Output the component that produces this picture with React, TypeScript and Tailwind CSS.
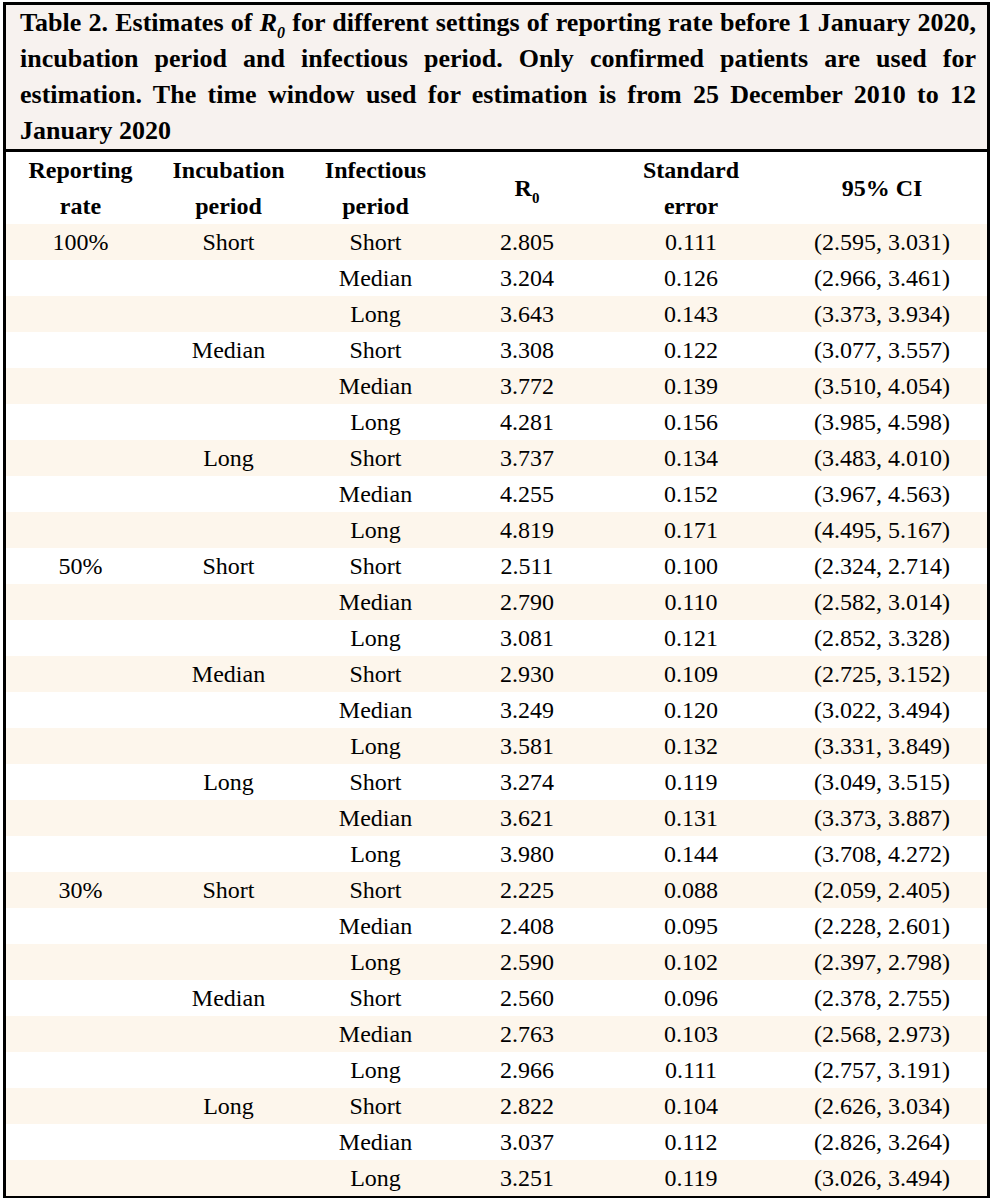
import React from "react";

type Row = { rate?: string; inc?: string; inf: string; r0: string; se: string; ci: string };

const rows: Row[] = [
  { rate: "100%", inc: "Short", inf: "Short", r0: "2.805", se: "0.111", ci: "(2.595, 3.031)" },
  { inf: "Median", r0: "3.204", se: "0.126", ci: "(2.966, 3.461)" },
  { inf: "Long", r0: "3.643", se: "0.143", ci: "(3.373, 3.934)" },
  { inc: "Median", inf: "Short", r0: "3.308", se: "0.122", ci: "(3.077, 3.557)" },
  { inf: "Median", r0: "3.772", se: "0.139", ci: "(3.510, 4.054)" },
  { inf: "Long", r0: "4.281", se: "0.156", ci: "(3.985, 4.598)" },
  { inc: "Long", inf: "Short", r0: "3.737", se: "0.134", ci: "(3.483, 4.010)" },
  { inf: "Median", r0: "4.255", se: "0.152", ci: "(3.967, 4.563)" },
  { inf: "Long", r0: "4.819", se: "0.171", ci: "(4.495, 5.167)" },
  { rate: "50%", inc: "Short", inf: "Short", r0: "2.511", se: "0.100", ci: "(2.324, 2.714)" },
  { inf: "Median", r0: "2.790", se: "0.110", ci: "(2.582, 3.014)" },
  { inf: "Long", r0: "3.081", se: "0.121", ci: "(2.852, 3.328)" },
  { inc: "Median", inf: "Short", r0: "2.930", se: "0.109", ci: "(2.725, 3.152)" },
  { inf: "Median", r0: "3.249", se: "0.120", ci: "(3.022, 3.494)" },
  { inf: "Long", r0: "3.581", se: "0.132", ci: "(3.331, 3.849)" },
  { inc: "Long", inf: "Short", r0: "3.274", se: "0.119", ci: "(3.049, 3.515)" },
  { inf: "Median", r0: "3.621", se: "0.131", ci: "(3.373, 3.887)" },
  { inf: "Long", r0: "3.980", se: "0.144", ci: "(3.708, 4.272)" },
  { rate: "30%", inc: "Short", inf: "Short", r0: "2.225", se: "0.088", ci: "(2.059, 2.405)" },
  { inf: "Median", r0: "2.408", se: "0.095", ci: "(2.228, 2.601)" },
  { inf: "Long", r0: "2.590", se: "0.102", ci: "(2.397, 2.798)" },
  { inc: "Median", inf: "Short", r0: "2.560", se: "0.096", ci: "(2.378, 2.755)" },
  { inf: "Median", r0: "2.763", se: "0.103", ci: "(2.568, 2.973)" },
  { inf: "Long", r0: "2.966", se: "0.111", ci: "(2.757, 3.191)" },
  { inc: "Long", inf: "Short", r0: "2.822", se: "0.104", ci: "(2.626, 3.034)" },
  { inf: "Median", r0: "3.037", se: "0.112", ci: "(2.826, 3.264)" },
  { inf: "Long", r0: "3.251", se: "0.119", ci: "(3.026, 3.494)" },
];

const App = () => {
  return (
    <div className="bg-white w-[992px] h-[1198px] pt-[2px] pl-[3px] font-['Liberation_Serif','Times_New_Roman',serif] text-black">
      <div className="w-[987px] border-[3px] border-black">
        {/* Caption */}
        <div className="bg-[#f7f2ef] pl-[14px] pr-[11px] text-[26px] leading-[36px] font-bold text-justify border-b-[3px] border-black">
          Table 2. Estimates of{" "}
          <i>
            R<sub className="text-[16px] leading-none align-[-3px]">0</sub>
          </i>{" "}
          for different settings of reporting rate before 1 January 2020, incubation period and infectious period. Only confirmed patients are used for estimation. The time window used for estimation is from 25 December 2010 to 12 January 2020
        </div>

        {/* Table */}
        <table className="w-full table-fixed border-collapse text-[24px] leading-[36px]">
          <colgroup>
            <col className="w-[149px]" />
            <col className="w-[147px]" />
            <col className="w-[147px]" />
            <col className="w-[156px]" />
            <col className="w-[172px]" />
            <col />
          </colgroup>
          <thead>
            <tr className="text-center">
              <th className="p-0 font-bold">Reporting<br />rate</th>
              <th className="p-0 font-bold">Incubation<br />period</th>
              <th className="p-0 font-bold">Infectious<br />period</th>
              <th className="p-0 font-bold">
                R<sub className="text-[15px] leading-none align-[-3px]">0</sub>
              </th>
              <th className="p-0 font-bold">Standard<br />error</th>
              <th className="p-0 font-bold">95% CI</th>
            </tr>
          </thead>
          <tbody>
            {rows.map((r, i) => (
              <tr key={i} className={i % 2 === 0 ? "bg-[#fdf6ec] h-[36px]" : "bg-white h-[36px]"}>
                <td className="p-0 text-center">{r.rate}</td>
                <td className="p-0 text-center">{r.inc}</td>
                <td className="p-0 text-center">{r.inf}</td>
                <td className="p-0 text-center">{r.r0}</td>
                <td className="p-0 text-center">{r.se}</td>
                <td className="p-0 text-center">{r.ci}</td>
              </tr>
            ))}
          </tbody>
        </table>
      </div>
    </div>
  );
};

export default App;
